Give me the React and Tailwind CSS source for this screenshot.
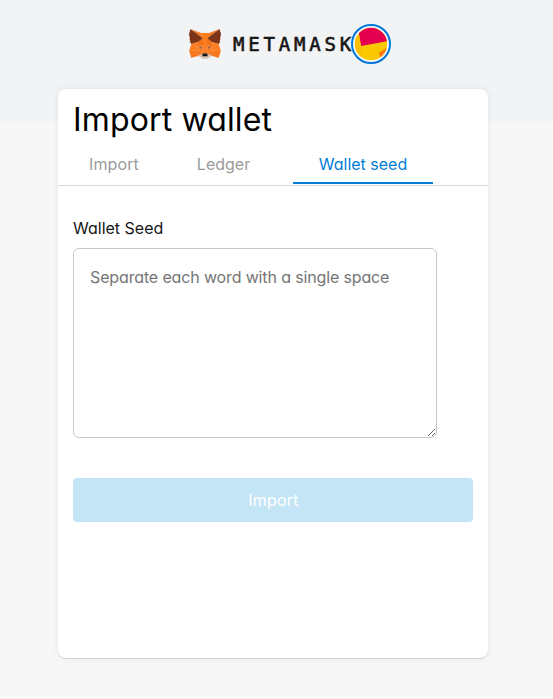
import React from "react";

const FOX = [
  ["#F5781F", "274.1,35.5 174.6,109.4 193,65.8"],
  ["#F5781F", "44.4,35.5 143.1,110.1 125.6,65.8"],
  ["#F9761C", "238.3,206.8 211.8,247.4 268.5,263 284.8,207.7"],
  ["#F9761C", "33.9,207.7 50.1,263 106.8,247.4 80.3,206.8"],
  ["#F5741B", "103.6,138.2 87.8,162.1 144.1,164.6 142.1,104.1"],
  ["#F5741B", "214.9,138.2 175.9,103.4 174.6,164.6 230.8,162.1"],
  ["#F9761C", "106.8,247.4 140.6,230.9 111.4,208.1"],
  ["#F9761C", "177.9,230.9 211.8,247.4 207.1,208.1"],
  ["#D7C1B3", "211.8,247.4 177.9,230.9 180.6,253 180.3,262.3"],
  ["#D7C1B3", "106.8,247.4 138.3,262.3 138.1,253 140.6,230.9"],
  ["#5A463F", "138.8,193.5 110.6,185.2 130.5,176.1"],
  ["#5A463F", "179.7,193.5 188,176.1 208,185.2"],
  ["#F2701B", "106.8,247.4 111.6,206.8 80.3,207.7"],
  ["#F2701B", "207,206.8 211.8,247.4 238.3,207.7"],
  ["#ED701C", "230.8,162.1 174.6,164.6 179.8,193.5 188.1,176.1 208.1,185.2"],
  ["#ED701C", "110.6,185.2 130.6,176.1 138.8,193.5 144.1,164.6 87.8,162.1"],
  ["#F5741B", "87.8,162.1 111.4,208.1 110.6,185.2"],
  ["#F5741B", "208.1,185.2 207.1,208.1 230.8,162.1"],
  ["#F5741B", "144.1,164.6 138.8,193.5 145.4,227.6 146.9,182.7"],
  ["#F5741B", "174.6,164.6 171.9,182.6 173.1,227.6 179.8,193.5"],
  ["#FC7D1E", "179.8,193.5 173.1,227.6 177.9,230.9 207.1,208.1 208.1,185.2"],
  ["#FC7D1E", "110.6,185.2 111.4,208.1 140.6,230.9 145.4,227.6 138.8,193.5"],
  ["#D7C1B3", "180.3,262.3 180.6,253 178.1,250.8 140.4,250.8 138.1,253 138.3,262.3 106.8,247.4 117.8,256.4 140.1,271.9 178.4,271.9 200.8,256.4 211.8,247.4"],
  ["#161616", "177.9,230.9 173.1,227.6 145.4,227.6 140.6,230.9 138.1,253 140.4,250.8 178.1,250.8 180.6,253"],
  ["#7C3517", "278.3,114.2 286.8,73.4 274.1,35.5 177.9,106.9 214.9,138.2 267.2,153.5 278.8,140 273.8,136.4 281.8,129.1 275.6,124.3 283.6,118.2"],
  ["#7C3517", "31.8,73.4 40.3,114.2 34.9,118.2 42.9,124.3 36.8,129.1 44.8,136.4 39.8,140 51.3,153.5 103.6,138.2 140.6,106.9 44.4,35.5"],
  ["#FC7D1E", "267.2,153.5 214.9,138.2 230.8,162.1 207.1,208.1 238.3,207.7 284.8,207.7"],
  ["#FC7D1E", "103.6,138.2 51.3,153.5 33.9,207.7 80.3,207.7 111.4,208.1 87.8,162.1"],
  ["#FC7D1E", "174.6,164.6 177.9,106.9 193.1,65.8 125.6,65.8 140.6,106.9 144.1,164.6 145.3,182.8 145.4,227.6 173.1,227.6 173.3,182.8"],
];

function Fox() {
  return (
    <svg viewBox="31.8 35.5 255 236.4" className="h-[30px] w-8 shrink-0">
      {FOX.map(([fill, points]) => (
        <polygon key={points} fill={fill} stroke={fill} strokeWidth="1" points={points} />
      ))}
    </svg>
  );
}

function Avatar() {
  return (
    <svg viewBox="0 0 40 40" className="size-10 shrink-0">
      <defs>
        <clipPath id="avatar">
          <circle cx="20" cy="20" r="16.2" />
        </clipPath>
      </defs>
      <circle cx="20" cy="20" r="19" fill="#f7f9fb" stroke="#0376d9" strokeWidth="2" />
      <g clipPath="url(#avatar)">
        <rect width="40" height="40" fill="#fac800" />
        <path d="M6.5 0H40V16.5L10 22Z" fill="#e4004f" />
        <path d="M0 12L8 11L10 22L11.5 40H0Z" fill="#fcc006" />
        <path d="M40 21L27.5 29L31 36Z" fill="#fb7a0b" />
      </g>
    </svg>
  );
}

export default function App() {
  return (
    <div className="h-[699px] w-full overflow-hidden bg-[linear-gradient(#f2f3f4_121px,#f7f7f7_121px)] font-['Inter',sans-serif] [font-feature-settings:'cv11']">
      <header className="flex h-[89px] items-start pt-6 pl-[189px]">
        <div className="flex h-10 items-center">
          <Fox />
          <span className="ml-3 w-[118px] font-['DejaVu_Sans_Mono',monospace] text-[19px] leading-10 tracking-[3.8px] whitespace-nowrap text-[#161616] [-webkit-text-stroke:0.6px_#161616]">
            METAMASK
          </span>
          <Avatar />
        </div>
      </header>

      <main className="ml-[58px] flex h-[569px] w-[430px] flex-col rounded-lg bg-white shadow-[0_0_7px_rgba(0,0,0,0.08),0_1px_0_#d6dce2]">
        <h1 className="h-[61px] pt-[7px] pl-[15px] text-[32px] leading-[48px] tracking-[0.15px] text-black">
          Import wallet
        </h1>
        <nav className="flex h-9 items-start border-b border-[#d2d8dd] pl-4 text-[16px] leading-[28px] text-[#9b9b9b]">
          <button className="h-[34px] w-20 pb-1.5 tracking-[0.12px]">Import</button>
          <button className="h-[34px] w-[139px] pb-1.5">Ledger</button>
          <button className="h-[34px] w-[140px] border-b-2 border-[#037dd6] pb-1 text-[#037dd6]">
            Wallet seed
          </button>
        </nav>

        <form className="flex flex-col px-[15px] pt-[30px]">
          <label htmlFor="seed" className="mb-2 text-base leading-6 text-[#161616]">
            Wallet Seed
          </label>
          <textarea
            id="seed"
            placeholder="Separate each word with a single space"
            className="h-[190px] w-[364px] resize rounded-md border border-[#c8c8c8] bg-white px-4 pt-[15px] text-base leading-[26px] tracking-[-0.14px] placeholder:text-[#757575]"
          />
          <button type="button" className="mt-10 h-11 rounded bg-[#c4e5f6] pl-px text-base tracking-[0.2px] text-white">
            Import
          </button>
        </form>
      </main>
    </div>
  );
}
